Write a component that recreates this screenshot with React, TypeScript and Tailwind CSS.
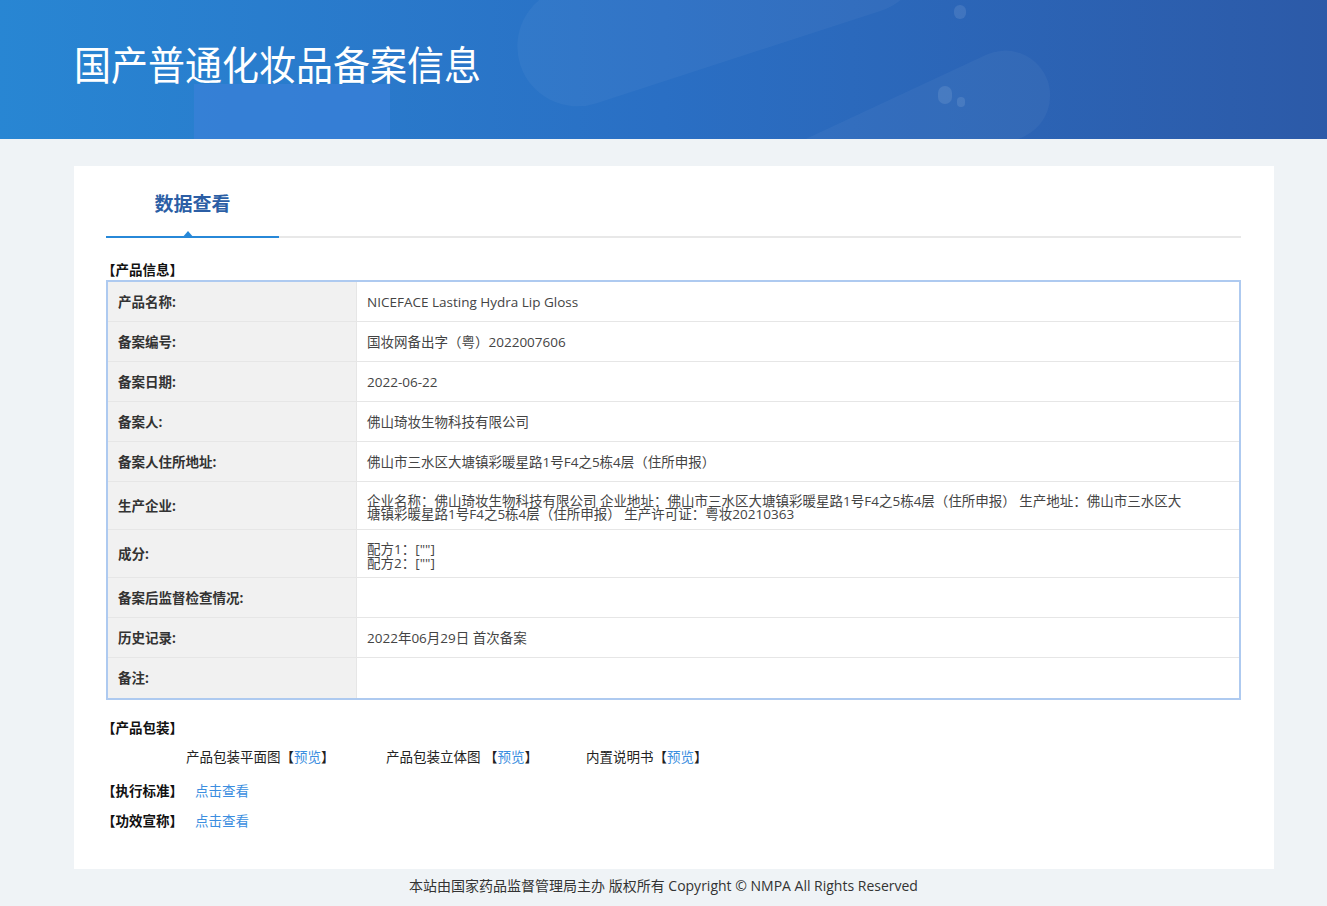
import React from "react";

const FONT = '"Open Sans", "Noto Sans CJK SC", sans-serif';

type Row = { label: string; value: React.ReactNode; tall?: boolean };

const rows: Row[] = [
  { label: "产品名称:", value: "NICEFACE Lasting Hydra Lip Gloss" },
  { label: "备案编号:", value: "国妆网备出字（粤）2022007606" },
  { label: "备案日期:", value: "2022-06-22" },
  { label: "备案人:", value: "佛山琦妆生物科技有限公司" },
  { label: "备案人住所地址:", value: "佛山市三水区大塘镇彩暖星路1号F4之5栋4层（住所申报）" },
  {
    label: "生产企业:",
    tall: true,
    value: (
      <div className="leading-[13px] pr-[52px] pt-[2px]">
        企业名称：佛山琦妆生物科技有限公司 企业地址：佛山市三水区大塘镇彩暖星路1号F4之5栋4层（住所申报） 生产地址：佛山市三水区大塘镇彩暖星路1号F4之5栋4层（住所申报） 生产许可证：粤妆20210363
      </div>
    ),
  },
  {
    label: "成分:",
    tall: true,
    value: (
      <div className="leading-[14px] pt-[2px]">
        <div>配方1：[""]</div>
        <div>配方2：[""]</div>
      </div>
    ),
  },
  { label: "备案后监督检查情况:", value: "" },
  { label: "历史记录:", value: "2022年06月29日 首次备案" },
  { label: "备注:", value: "" },
];

function Header() {
  return (
    <div className="relative h-[139px] overflow-hidden bg-gradient-to-r from-[#2886d3] via-[#2a6fc4] to-[#2c5aa8]">
      {/* background decoration */}
      <div className="absolute left-[194px] top-[84px] w-[196px] h-[80px] bg-[#3a80d8]/70" />
      <div className="absolute left-[510px] -top-[60px] w-[420px] h-[120px] rounded-full bg-white/[0.04] rotate-[-18deg]" />
      <div className="absolute left-[760px] top-[95px] w-[300px] h-[90px] rounded-full bg-white/[0.04] rotate-[-25deg]" />
      <div className="absolute left-[954px] top-[5px] w-[12px] h-[14px] rounded-full bg-white/10" />
      <div className="absolute left-[938px] top-[86px] w-[14px] h-[18px] rounded-full bg-white/10" />
      <div className="absolute left-[957px] top-[97px] w-[8px] h-[10px] rounded-full bg-white/10" />
      <div className="relative h-full flex items-center pl-[74px] pb-[10px]">
        <h1 className="text-white text-[37px] leading-none tracking-[0px] scale-y-[1.08] origin-left">国产普通化妆品备案信息</h1>
      </div>
    </div>
  );
}

function Tabs() {
  return (
    <div className="flex items-end border-b-2 border-[#e8e8e8]">
      <div className="relative w-[173px] -mb-[2px] border-b-2 border-[#2788d8] pb-[17px] text-center">
        <span className="text-[19px] font-bold text-[#2b5ea5]">数据查看</span>
        <div className="absolute left-[76px] -bottom-[2px] w-0 h-0 border-x-[6px] border-x-transparent border-b-[7px] border-b-[#2788d8]" />
      </div>
    </div>
  );
}

function InfoTable() {
  return (
    <div className="border-2 border-[#aecaf0]">
      {rows.map((r, i) => (
        <div
          key={r.label}
          className={`flex ${r.tall ? "h-[48px]" : "h-[40px]"} ${i < rows.length - 1 ? "border-b border-[#e6e6e6]" : ""}`}
        >
          <div className="w-[249px] shrink-0 bg-[#f1f1f1] border-r border-[#e6e6e6] flex items-center pl-[10px] pt-[2px] text-[13.5px] font-bold text-[#333]">
            {r.label}
          </div>
          <div className="flex-1 flex items-center pl-[10px] pt-[3px] text-[13.5px] text-[#444]">{r.value}</div>
        </div>
      ))}
    </div>
  );
}

export default function App() {
  return (
    <div className="min-h-[906px] bg-[#eff3f6]" style={{ fontFamily: FONT }}>
      <Header />
      <div className="pt-[27px] pl-[74px]">
        <div className="bg-white w-[1200px] h-[703px] pl-[32px] pr-[33px] pt-[24px]">
          <Tabs />
          <div className="mt-[24px] -ml-[4px] text-[13.5px] font-bold text-[#111] leading-[16px]">【产品信息】</div>
          <div className="mt-[2px]">
            <InfoTable />
          </div>
          <div className="mt-[18px] -ml-[4px] text-[13.5px] font-bold text-[#111]">【产品包装】</div>
          <div className="mt-[9px] flex pl-[80px] text-[13.5px] text-[#222]">
            <div className="w-[200px]">
              产品包装平面图【<span className="text-[#3b8ee0]">预览</span>】
            </div>
            <div className="w-[200px]">
              产品包装立体图 【<span className="text-[#3b8ee0]">预览</span>】
            </div>
            <div className="w-[200px]">
              内置说明书【<span className="text-[#3b8ee0]">预览</span>】
            </div>
          </div>
          <div className="mt-[14px] -ml-[4px] flex items-center gap-[12px] text-[13.5px]">
            <span className="font-bold text-[#111]">【执行标准】</span>
            <span className="text-[#3b8ee0]">点击查看</span>
          </div>
          <div className="mt-[10px] -ml-[4px] flex items-center gap-[12px] text-[13.5px]">
            <span className="font-bold text-[#111]">【功效宣称】</span>
            <span className="text-[#3b8ee0]">点击查看</span>
          </div>
        </div>
      </div>
      <div className="h-[32px] flex items-center justify-center text-[14px] text-[#333]">
        本站由国家药品监督管理局主办 版权所有 Copyright © NMPA All Rights Reserved
      </div>
    </div>
  );
}
